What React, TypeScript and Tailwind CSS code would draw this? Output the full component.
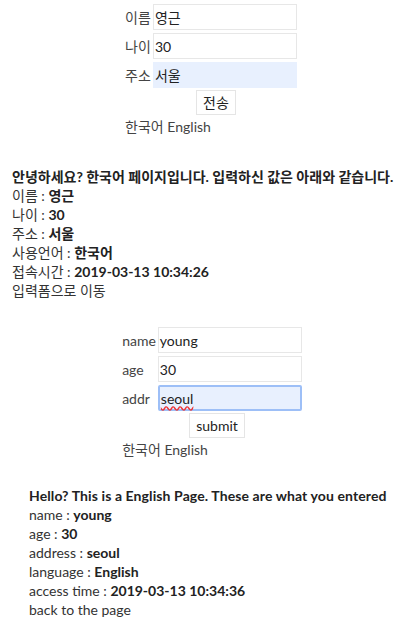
const fontStack = "font-['Lato','Noto_Sans_CJK_KR',sans-serif]";

interface Field {
  label: string;
  value: string;
  focused?: boolean;
}

const koFields: Field[] = [
  { label: '이름', value: '영근' },
  { label: '나이', value: '30' },
  { label: '주소', value: '서울', focused: true },
];

const enFields: Field[] = [
  { label: 'name', value: 'young' },
  { label: 'age', value: '30' },
  { label: 'addr', value: 'seoul', focused: true },
];

function InputForm({ fields, submit, focusRing }: { fields: Field[]; submit: string; focusRing?: boolean }) {
  return (
    <div className="flex flex-col">
      <div className="grid grid-cols-[auto_144px] items-center gap-y-[3px]">
        {fields.map((f) => [
          <span key={f.label + '-l'} className="pr-[2px] text-[14px] text-[#444]">
            {f.label}
          </span>,
          f.focused ? (
            <div
              key={f.label + '-v'}
              className={`flex h-[26px] items-center px-[1px] text-[14px] text-[#222] bg-[#e8f0fe] ${
                focusRing ? 'border-2 border-[#9dbff7] rounded-[2px]' : 'border border-[#e8f0fe]'
              }`}
            >
              <span className={focusRing ? 'underline decoration-wavy decoration-[#e33] underline-offset-2' : ''}>{f.value}</span>
            </div>
          ) : (
            <div key={f.label + '-v'} className="flex h-[26px] items-center border border-[#e7e7e7] bg-white px-[1px] text-[14px] text-[#222]">
              {f.value}
            </div>
          ),
        ])}
      </div>
      <div className="mt-[2px] flex justify-center pl-[10px]">
        <button className="h-[25px] border border-[#e5e5e5] bg-white px-[6px] text-[14px] text-[#222]">{submit}</button>
      </div>
      <div className="mt-[1px] text-[14px] leading-[22px] text-[#444]">
        한국어 <span>English</span>
      </div>
    </div>
  );
}

function ResultRow({ label, value }: { label: string; value: string }) {
  return (
    <div>
      {label} : <b className="font-bold text-[#222]">{value}</b>
    </div>
  );
}

export default function App() {
  return (
    <div className={`${fontStack} w-[420px] h-[635px] bg-white text-[#333] overflow-hidden`}>
      {/* Korean form */}
      <div className="flex justify-center pt-[4px] pl-[2px]">
        <InputForm fields={koFields} submit="전송" />
      </div>

      {/* Korean result */}
      <div className="mt-[29px] pl-[12px] text-[14px] leading-[19px]">
        <div className="font-bold text-[#222]">안녕하세요? 한국어 페이지입니다. 입력하신 값은 아래와 같습니다.</div>
        <ResultRow label="이름" value="영근" />
        <ResultRow label="나이" value="30" />
        <ResultRow label="주소" value="서울" />
        <ResultRow label="사용언어" value="한국어" />
        <ResultRow label="접속시간" value="2019-03-13 10:34:26" />
        <div>입력폼으로 이동</div>
      </div>

      {/* English form */}
      <div className="mt-[27px] flex justify-center pl-[4px]">
        <InputForm fields={enFields} submit="submit" focusRing />
      </div>

      {/* English result */}
      <div className="mt-[25px] pl-[29px] text-[14px] leading-[19px]">
        <div className="font-bold tracking-[0.1px] text-[#222]">Hello? This is a English Page. These are what you entered</div>
        <ResultRow label="name" value="young" />
        <ResultRow label="age" value="30" />
        <ResultRow label="address" value="seoul" />
        <ResultRow label="language" value="English" />
        <ResultRow label="access time" value="2019-03-13 10:34:36" />
        <div>back to the page</div>
      </div>
    </div>
  );
}
